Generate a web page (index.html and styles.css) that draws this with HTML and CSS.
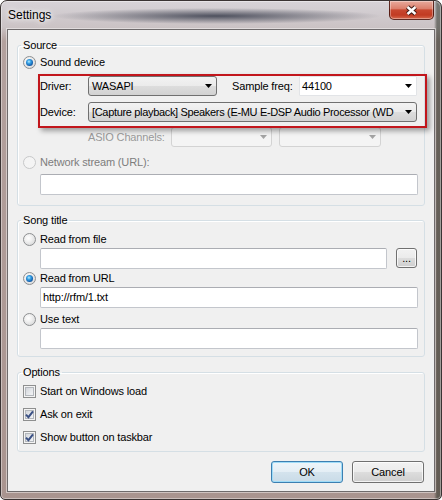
FILE: index.html
```html
<!DOCTYPE html>
<html lang="en">
<head>
<meta charset="UTF-8">
<meta name="viewport" content="width=device-width, initial-scale=1.0">
<title>Settings</title>
<link rel="stylesheet" href="styles.css">
</head>
<body>
<div class="window">
  <div class="titlebar">
    <span class="title">Settings</span>
    <div class="close">
      <svg width="13" height="11" viewBox="0 0 13 11">
        <path class="x-out" d="M2.5 2L10.5 9M10.5 2L2.5 9"/>
        <path class="x-in" d="M2.5 2L10.5 9M10.5 2L2.5 9"/>
      </svg>
    </div>
  </div>

  <div class="client">
    <fieldset class="group group-source">
      <legend>Source</legend>
      <div class="opt first"><span class="radio checked"></span>Sound device</div>

      <div class="highlight">
        <div class="row">
          <span class="lbl lbl-left">Driver:</span>
          <div class="combo combo-driver"><span>WASAPI</span><svg class="arrow" width="7" height="4"><path d="M0 0H7L3.5 4Z"/></svg></div>
          <span class="lbl lbl-freq">Sample freq:</span>
          <div class="combo combo-edit combo-freq"><span>44100</span><svg class="arrow" width="7" height="4"><path d="M0 0H7L3.5 4Z"/></svg></div>
        </div>
        <div class="row">
          <span class="lbl lbl-left">Device:</span>
          <div class="combo combo-device"><span>[Capture playback] Speakers (E-MU E-DSP Audio Processor (WD</span><svg class="arrow" width="7" height="4"><path d="M0 0H7L3.5 4Z"/></svg></div>
        </div>
      </div>

      <div class="row asio">
        <span class="lbl lbl-asio">ASIO Channels:</span>
        <div class="combo combo-off combo-asio1"><span></span><svg class="arrow" width="7" height="4"><path d="M0 0H7L3.5 4Z"/></svg></div>
        <div class="combo combo-off combo-asio2"><span></span><svg class="arrow" width="7" height="4"><path d="M0 0H7L3.5 4Z"/></svg></div>
      </div>

      <div class="opt net"><span class="radio off"></span><span class="text-off">Network stream (URL):</span></div>
      <div class="edit edit-net"></div>
    </fieldset>

    <fieldset class="group group-song">
      <legend>Song title</legend>
      <div class="opt first"><span class="radio"></span>Read from file</div>
      <div class="file-row">
        <div class="edit"></div>
        <div class="btn btn-browse">...</div>
      </div>
      <div class="opt"><span class="radio checked"></span>Read from URL</div>
      <div class="edit">http://rfm/1.txt</div>
      <div class="opt opt-text"><span class="radio"></span>Use text</div>
      <div class="edit"></div>
    </fieldset>

    <fieldset class="group group-options">
      <legend>Options</legend>
      <div class="opt first"><span class="check"></span>Start on Windows load</div>
      <div class="opt"><span class="check"><svg width="9" height="9" viewBox="0 0 9 9"><path d="M1 4.6L3.4 7.2L8 1.3"/></svg></span>Ask on exit</div>
      <div class="opt"><span class="check"><svg width="9" height="9" viewBox="0 0 9 9"><path d="M1 4.6L3.4 7.2L8 1.3"/></svg></span>Show button on taskbar</div>
    </fieldset>

    <div class="buttons">
      <div class="btn btn-default">OK</div>
      <div class="btn">Cancel</div>
    </div>
  </div>
</div>
</body>
</html>
```

FILE: styles.css
```css
body {
    margin: 0;
    font-family: "Liberation Sans", Arial, sans-serif;
    font-size: 11px;
    line-height: 13px;
    letter-spacing: -0.15px;
    color: #000;
}

.window {
    width: 442px;
    height: 500px;
    box-sizing: border-box;
    border: 1px solid #3a3333;
    border-radius: 7px 7px 5px 5px;
    background:
        radial-gradient(ellipse 165px 8px at 215px 15px, rgba(45, 50, 66, 0.8), rgba(45, 50, 66, 0)),
        linear-gradient(to right, rgba(0, 0, 0, 0) 433px, rgba(40, 45, 35, 0.55) 436px),
        linear-gradient(#d7d3d8 0, #cbc3c5 26px, #b3a19e 40px, #a9948f 100%);
    box-shadow: inset 0 0 0 1px rgba(255, 255, 255, 0.4);
    overflow: hidden;
}

.titlebar {
    height: 28px;
    display: flex;
    justify-content: space-between;
    align-items: flex-start;
    padding: 0 7px 0 7px;
}

.title {
    margin-top: 7px;
    font-size: 12px;
    line-height: 14px;
    letter-spacing: 0;
    text-shadow: 0 0 5px #fff, 0 0 9px rgba(255, 255, 255, 0.9);
}

.close {
    width: 45px;
    height: 19px;
    box-sizing: border-box;
    border: 1px solid rgba(70, 22, 16, 0.85);
    border-top: none;
    border-radius: 0 0 5px 5px;
    background: linear-gradient(#e8aa9c 0, #dc7f6c 42%, #c8472f 50%, #c13b23 78%, #d6694d 100%);
    box-shadow: inset 0 0 0 1px rgba(255, 255, 255, 0.35);
    display: flex;
    align-items: center;
    justify-content: center;
}

.x-out {
    fill: none;
    stroke: #3d1a15;
    stroke-width: 4.4;
}

.x-in {
    fill: none;
    stroke: #fff;
    stroke-width: 2.4;
}

.client {
    height: 463px;
    box-sizing: border-box;
    margin: 0 6px;
    border: 1px solid #6e6a6b;
    background: #f0f0f0;
    box-shadow: 0 0 0 1px rgba(255, 255, 255, 0.45);
    padding: 9px 9px 0 9px;
}

/* group boxes */

.group {
    margin: 0;
    min-width: 0;
    border: 1px solid #d5dfe5;
    border-radius: 3px;
    box-shadow: inset 1px 1px 0 #fff;
    padding: 0 6px 10px 5px;
}

.group legend {
    padding: 0 2px;
    margin-left: -2px;
    line-height: 13px;
}

.group-song {
    margin-top: 8px;
    padding-bottom: 7px;
}

.group-options {
    margin-top: 9px;
    padding-bottom: 6px;
}

/* radio and check rows */

.opt {
    display: flex;
    align-items: center;
    gap: 4px;
    height: 16px;
    margin-top: 1px;
}

.group-source .first { margin-top: 2px; }
.group-song .first { margin-top: 4px; }
.group-options .first { margin-top: 4px; }
.group-options .opt + .opt { margin-top: 7px; }
.opt-text { margin-top: 3px; }
.net { margin-top: 7px; }

.radio {
    width: 13px;
    height: 13px;
    box-sizing: border-box;
    border-radius: 50%;
    border: 1px solid #8d8f91;
    background: radial-gradient(circle at 40% 38%, #ffffff 0, #f1f1f1 35%, #cfd0d1 100%);
    display: flex;
    align-items: center;
    justify-content: center;
    flex: none;
}

.radio.checked::after {
    content: "";
    width: 7px;
    height: 7px;
    border-radius: 50%;
    background: radial-gradient(circle at 42% 38%, #b8ecff 0, #3aa4e6 30%, #1562b0 65%, #0b2f66 100%);
}

.radio.off {
    border-color: #c7c8c9;
    background: #f4f4f4;
}

.text-off {
    color: #7d7d7d;
}

.check {
    width: 13px;
    height: 13px;
    box-sizing: border-box;
    border: 1px solid #8e8f8f;
    background: linear-gradient(135deg, #c9cdd3 0, #e9ebee 60%, #f8f8f8 100%);
    box-shadow: inset 0 0 0 1px #f4f4f4, inset 0 0 0 2px #b3b7bc;
    display: flex;
    align-items: center;
    justify-content: center;
    flex: none;
}

.check svg path {
    fill: none;
    stroke: #3b5185;
    stroke-width: 2;
}

/* source controls */

.highlight {
    position: relative;
    z-index: 1;
    margin: 4px -9px 0 15px;
    border: 2px solid #c2161c;
    padding-bottom: 4px;
    box-shadow: 3px 3px 5px rgba(0, 0, 0, 0.35);
}

.row {
    display: flex;
    align-items: center;
    height: 20px;
}

.row + .row {
    margin-top: 6px;
}

.lbl-left {
    width: 48px;
}

.lbl-freq {
    width: 67px;
    margin-left: 15px;
}

.combo {
    height: 20px;
    box-sizing: border-box;
    border: 1px solid #707070;
    border-radius: 3px;
    background: linear-gradient(#f2f2f2 0, #ebebeb 50%, #dddddd 51%, #d2d2d2 100%);
    display: flex;
    align-items: center;
    justify-content: space-between;
    gap: 4px;
    padding: 0 4px 0 3px;
    white-space: nowrap;
}

.combo-driver { width: 129px; }
.combo-freq { width: 118px; padding-left: 2px; }
.combo-device { width: 329px; }

.combo-device span {
    letter-spacing: -0.33px;
}

.combo-edit {
    border-color: #e2e4e7;
    border-radius: 1px;
    background: #fff;
}

.arrow {
    flex: none;
}

.arrow path {
    fill: #000;
}

.asio {
    margin: -1px 0 0 17px;
}

.lbl-asio {
    width: 83px;
    margin-left: 48px;
    color: #999;
}

.combo-off {
    border-color: #d3d3d3;
    background: #f4f4f4;
}

.combo-off .arrow path {
    fill: #a3a3a3;
}

.combo-asio1 { width: 101px; }
.combo-asio2 { width: 102px; margin-left: 7px; }

/* edits and buttons */

.edit {
    height: 21px;
    box-sizing: border-box;
    margin: 1px 0 0 17px;
    border: 1px solid #c3c6cc;
    border-top-color: #abadb3;
    border-radius: 2px;
    background: #fff;
    padding: 3px 2px 0 2px;
}

.edit-net {
    margin-top: 4px;
}

.file-row {
    display: flex;
    gap: 9px;
    margin: 1px 1px 0 17px;
}

.file-row .edit {
    flex: 1;
    margin: 0;
}

.btn {
    width: 72px;
    height: 22px;
    box-sizing: border-box;
    border: 1px solid #707070;
    border-radius: 3px;
    background: linear-gradient(#f2f2f2 0, #ebebeb 50%, #dddddd 51%, #cfcfcf 100%);
    box-shadow: inset 0 0 0 1px rgba(255, 255, 255, 0.75);
    display: flex;
    align-items: center;
    justify-content: center;
}

.btn-browse {
    width: 21px;
    height: 20px;
    align-items: flex-end;
    line-height: 12px;
    padding-bottom: 3px;
}

.btn-default {
    border-color: #3c7fb1;
    background: linear-gradient(#eef5fa 0, #e4eef5 50%, #d4e3ed 51%, #c9dbe7 100%);
    box-shadow: inset 0 0 0 1px #9fdcf8;
}

.buttons {
    display: flex;
    justify-content: flex-end;
    gap: 9px;
    margin-top: 9px;
    padding-right: 1px;
}
```
